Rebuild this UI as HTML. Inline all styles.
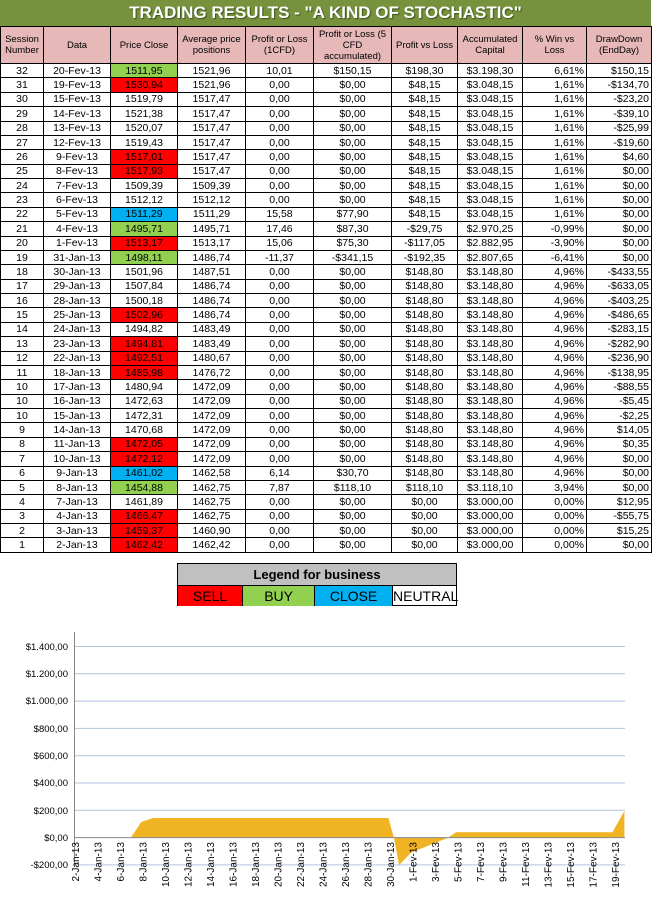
<!DOCTYPE html>
<html><head><meta charset="utf-8"><style>
body{margin:0;background:#fff;width:668px;height:922px;overflow:hidden;font-family:"Liberation Sans",Arial,sans-serif;position:relative}
.title{position:absolute;left:0;top:0;width:651px;height:26px;background:#76923c;color:#fff;font-weight:bold;font-size:17px;text-align:center;line-height:26px;text-shadow:1px 1px 1px #3d4f1c}
table{position:absolute;left:0;top:26px;width:651px;border-collapse:collapse;table-layout:fixed;font-size:10.5px;color:#000}
td{border:1px solid #000;padding:0 2px;height:14.38px;line-height:12px;text-align:center;white-space:nowrap;overflow:hidden;box-sizing:border-box}
tr.h td{background:#e6b8b7;height:37px;font-size:9.5px;line-height:11px;white-space:normal;padding:0 1px}
td.r{text-align:right}
.R{background:#ff0000}.G{background:#92d050}.B{background:#00b0f0}
.leg{position:absolute;left:177px;top:563px;width:280px;height:43px;border:1px solid #000;box-sizing:border-box;font-family:"Liberation Sans Narrow","Liberation Sans",sans-serif}
.leg .hd{height:21px;background:#c0c0c0;border-bottom:1px solid #000;text-align:center;font-weight:bold;font-size:13px;line-height:21px}
.leg .row{display:flex;height:20px;font-size:14px;line-height:21px}
.leg .row div{text-align:center;border-right:1px solid #000}
</style></head><body>
<div class="title">TRADING RESULTS - "A KIND OF STOCHASTIC"</div>
<table>
<colgroup><col style="width:43px"><col style="width:67px"><col style="width:67px"><col style="width:68px"><col style="width:68px"><col style="width:78px"><col style="width:66px"><col style="width:65px"><col style="width:64px"><col style="width:65px"></colgroup>
<tr class="h"><td>Session Number</td><td>Data</td><td>Price Close</td><td>Average price positions</td><td>Profit or Loss (1CFD)</td><td>Profit or Loss (5 CFD accumulated)</td><td>Profit vs Loss</td><td>Accumulated Capital</td><td>% Win vs Loss</td><td>DrawDown (EndDay)</td></tr>
<tr><td>32</td><td>20-Fev-13</td><td class="G">1511,95</td><td>1521,96</td><td>10,01</td><td>$150,15</td><td>$198,30</td><td>$3.198,30</td><td class="r">6,61%</td><td class="r">$150,15</td></tr>
<tr><td>31</td><td>19-Fev-13</td><td class="R">1530,94</td><td>1521,96</td><td>0,00</td><td>$0,00</td><td>$48,15</td><td>$3.048,15</td><td class="r">1,61%</td><td class="r">-$134,70</td></tr>
<tr><td>30</td><td>15-Fev-13</td><td>1519,79</td><td>1517,47</td><td>0,00</td><td>$0,00</td><td>$48,15</td><td>$3.048,15</td><td class="r">1,61%</td><td class="r">-$23,20</td></tr>
<tr><td>29</td><td>14-Fev-13</td><td>1521,38</td><td>1517,47</td><td>0,00</td><td>$0,00</td><td>$48,15</td><td>$3.048,15</td><td class="r">1,61%</td><td class="r">-$39,10</td></tr>
<tr><td>28</td><td>13-Fev-13</td><td>1520,07</td><td>1517,47</td><td>0,00</td><td>$0,00</td><td>$48,15</td><td>$3.048,15</td><td class="r">1,61%</td><td class="r">-$25,99</td></tr>
<tr><td>27</td><td>12-Fev-13</td><td>1519,43</td><td>1517,47</td><td>0,00</td><td>$0,00</td><td>$48,15</td><td>$3.048,15</td><td class="r">1,61%</td><td class="r">-$19,60</td></tr>
<tr><td>26</td><td>9-Fev-13</td><td class="R">1517,01</td><td>1517,47</td><td>0,00</td><td>$0,00</td><td>$48,15</td><td>$3.048,15</td><td class="r">1,61%</td><td class="r">$4,60</td></tr>
<tr><td>25</td><td>8-Fev-13</td><td class="R">1517,93</td><td>1517,47</td><td>0,00</td><td>$0,00</td><td>$48,15</td><td>$3.048,15</td><td class="r">1,61%</td><td class="r">$0,00</td></tr>
<tr><td>24</td><td>7-Fev-13</td><td>1509,39</td><td>1509,39</td><td>0,00</td><td>$0,00</td><td>$48,15</td><td>$3.048,15</td><td class="r">1,61%</td><td class="r">$0,00</td></tr>
<tr><td>23</td><td>6-Fev-13</td><td>1512,12</td><td>1512,12</td><td>0,00</td><td>$0,00</td><td>$48,15</td><td>$3.048,15</td><td class="r">1,61%</td><td class="r">$0,00</td></tr>
<tr><td>22</td><td>5-Fev-13</td><td class="B">1511,29</td><td>1511,29</td><td>15,58</td><td>$77,90</td><td>$48,15</td><td>$3.048,15</td><td class="r">1,61%</td><td class="r">$0,00</td></tr>
<tr><td>21</td><td>4-Fev-13</td><td class="G">1495,71</td><td>1495,71</td><td>17,46</td><td>$87,30</td><td>-$29,75</td><td>$2.970,25</td><td class="r">-0,99%</td><td class="r">$0,00</td></tr>
<tr><td>20</td><td>1-Fev-13</td><td class="R">1513,17</td><td>1513,17</td><td>15,06</td><td>$75,30</td><td>-$117,05</td><td>$2.882,95</td><td class="r">-3,90%</td><td class="r">$0,00</td></tr>
<tr><td>19</td><td>31-Jan-13</td><td class="G">1498,11</td><td>1486,74</td><td>-11,37</td><td>-$341,15</td><td>-$192,35</td><td>$2.807,65</td><td class="r">-6,41%</td><td class="r">$0,00</td></tr>
<tr><td>18</td><td>30-Jan-13</td><td>1501,96</td><td>1487,51</td><td>0,00</td><td>$0,00</td><td>$148,80</td><td>$3.148,80</td><td class="r">4,96%</td><td class="r">-$433,55</td></tr>
<tr><td>17</td><td>29-Jan-13</td><td>1507,84</td><td>1486,74</td><td>0,00</td><td>$0,00</td><td>$148,80</td><td>$3.148,80</td><td class="r">4,96%</td><td class="r">-$633,05</td></tr>
<tr><td>16</td><td>28-Jan-13</td><td>1500,18</td><td>1486,74</td><td>0,00</td><td>$0,00</td><td>$148,80</td><td>$3.148,80</td><td class="r">4,96%</td><td class="r">-$403,25</td></tr>
<tr><td>15</td><td>25-Jan-13</td><td class="R">1502,96</td><td>1486,74</td><td>0,00</td><td>$0,00</td><td>$148,80</td><td>$3.148,80</td><td class="r">4,96%</td><td class="r">-$486,65</td></tr>
<tr><td>14</td><td>24-Jan-13</td><td>1494,82</td><td>1483,49</td><td>0,00</td><td>$0,00</td><td>$148,80</td><td>$3.148,80</td><td class="r">4,96%</td><td class="r">-$283,15</td></tr>
<tr><td>13</td><td>23-Jan-13</td><td class="R">1494,81</td><td>1483,49</td><td>0,00</td><td>$0,00</td><td>$148,80</td><td>$3.148,80</td><td class="r">4,96%</td><td class="r">-$282,90</td></tr>
<tr><td>12</td><td>22-Jan-13</td><td class="R">1492,51</td><td>1480,67</td><td>0,00</td><td>$0,00</td><td>$148,80</td><td>$3.148,80</td><td class="r">4,96%</td><td class="r">-$236,90</td></tr>
<tr><td>11</td><td>18-Jan-13</td><td class="R">1485,98</td><td>1476,72</td><td>0,00</td><td>$0,00</td><td>$148,80</td><td>$3.148,80</td><td class="r">4,96%</td><td class="r">-$138,95</td></tr>
<tr><td>10</td><td>17-Jan-13</td><td>1480,94</td><td>1472,09</td><td>0,00</td><td>$0,00</td><td>$148,80</td><td>$3.148,80</td><td class="r">4,96%</td><td class="r">-$88,55</td></tr>
<tr><td>10</td><td>16-Jan-13</td><td>1472,63</td><td>1472,09</td><td>0,00</td><td>$0,00</td><td>$148,80</td><td>$3.148,80</td><td class="r">4,96%</td><td class="r">-$5,45</td></tr>
<tr><td>10</td><td>15-Jan-13</td><td>1472,31</td><td>1472,09</td><td>0,00</td><td>$0,00</td><td>$148,80</td><td>$3.148,80</td><td class="r">4,96%</td><td class="r">-$2,25</td></tr>
<tr><td>9</td><td>14-Jan-13</td><td>1470,68</td><td>1472,09</td><td>0,00</td><td>$0,00</td><td>$148,80</td><td>$3.148,80</td><td class="r">4,96%</td><td class="r">$14,05</td></tr>
<tr><td>8</td><td>11-Jan-13</td><td class="R">1472,05</td><td>1472,09</td><td>0,00</td><td>$0,00</td><td>$148,80</td><td>$3.148,80</td><td class="r">4,96%</td><td class="r">$0,35</td></tr>
<tr><td>7</td><td>10-Jan-13</td><td class="R">1472,12</td><td>1472,09</td><td>0,00</td><td>$0,00</td><td>$148,80</td><td>$3.148,80</td><td class="r">4,96%</td><td class="r">$0,00</td></tr>
<tr><td>6</td><td>9-Jan-13</td><td class="B">1461,02</td><td>1462,58</td><td>6,14</td><td>$30,70</td><td>$148,80</td><td>$3.148,80</td><td class="r">4,96%</td><td class="r">$0,00</td></tr>
<tr><td>5</td><td>8-Jan-13</td><td class="G">1454,88</td><td>1462,75</td><td>7,87</td><td>$118,10</td><td>$118,10</td><td>$3.118,10</td><td class="r">3,94%</td><td class="r">$0,00</td></tr>
<tr><td>4</td><td>7-Jan-13</td><td>1461,89</td><td>1462,75</td><td>0,00</td><td>$0,00</td><td>$0,00</td><td>$3.000,00</td><td class="r">0,00%</td><td class="r">$12,95</td></tr>
<tr><td>3</td><td>4-Jan-13</td><td class="R">1466,47</td><td>1462,75</td><td>0,00</td><td>$0,00</td><td>$0,00</td><td>$3.000,00</td><td class="r">0,00%</td><td class="r">-$55,75</td></tr>
<tr><td>2</td><td>3-Jan-13</td><td class="R">1459,37</td><td>1460,90</td><td>0,00</td><td>$0,00</td><td>$0,00</td><td>$3.000,00</td><td class="r">0,00%</td><td class="r">$15,25</td></tr>
<tr><td>1</td><td>2-Jan-13</td><td class="R">1462,42</td><td>1462,42</td><td>0,00</td><td>$0,00</td><td>$0,00</td><td>$3.000,00</td><td class="r">0,00%</td><td class="r">$0,00</td></tr>
</table>
<div class="leg"><div class="hd">Legend for business</div>
<div class="row"><div class="R" style="width:65px">SELL</div><div class="G" style="width:72px">BUY</div><div class="B" style="width:78px">CLOSE</div><div style="width:63px;border:none">NEUTRAL</div></div></div>
<svg style="position:absolute;left:0;top:0" width="668" height="922" font-family="Liberation Sans, sans-serif" font-size="9.5">
<g stroke="#b4c3e0" stroke-width="1">
<line x1="74" x2="625" y1="646.5" y2="646.5"/><line x1="74" x2="625" y1="673.8" y2="673.8"/><line x1="74" x2="625" y1="701.1" y2="701.1"/><line x1="74" x2="625" y1="728.4" y2="728.4"/><line x1="74" x2="625" y1="755.7" y2="755.7"/><line x1="74" x2="625" y1="783" y2="783"/><line x1="74" x2="625" y1="810.3" y2="810.3"/><line x1="74" x2="625" y1="864.9" y2="864.9"/>
</g>
<polygon fill="#f0b323" points="130.6,838 141.3,822 152.9,818 388.4,818 394,838 399.1,865 411,852.7 434.7,843 447.5,838 456,832.3 612.4,832.3 624.4,811 624.4,838"/>
<line x1="74.5" x2="74.5" y1="632" y2="866" stroke="#888"/>
<line x1="74" x2="625" y1="837.6" y2="837.6" stroke="#888"/>
<g text-anchor="end" fill="#000">
<text x="68" y="650">$1.400,00</text><text x="68" y="677">$1.200,00</text><text x="68" y="704">$1.000,00</text><text x="68" y="732">$800,00</text><text x="68" y="759">$600,00</text><text x="68" y="786">$400,00</text><text x="68" y="814">$200,00</text><text x="68" y="841">$0,00</text><text x="68" y="868">-$200,00</text>
</g>
<g text-anchor="end" fill="#000" font-size="10">
<text transform="translate(79,842) rotate(-90)">2-Jan-13</text>
<text transform="translate(101.5,842) rotate(-90)">4-Jan-13</text>
<text transform="translate(124,842) rotate(-90)">6-Jan-13</text>
<text transform="translate(146.5,842) rotate(-90)">8-Jan-13</text>
<text transform="translate(169,842) rotate(-90)">10-Jan-13</text>
<text transform="translate(191.5,842) rotate(-90)">12-Jan-13</text>
<text transform="translate(214,842) rotate(-90)">14-Jan-13</text>
<text transform="translate(236.5,842) rotate(-90)">16-Jan-13</text>
<text transform="translate(259,842) rotate(-90)">18-Jan-13</text>
<text transform="translate(281.5,842) rotate(-90)">20-Jan-13</text>
<text transform="translate(304,842) rotate(-90)">22-Jan-13</text>
<text transform="translate(326.5,842) rotate(-90)">24-Jan-13</text>
<text transform="translate(349,842) rotate(-90)">26-Jan-13</text>
<text transform="translate(371.5,842) rotate(-90)">28-Jan-13</text>
<text transform="translate(394,842) rotate(-90)">30-Jan-13</text>
<text transform="translate(416.5,842) rotate(-90)">1-Fev-13</text>
<text transform="translate(439,842) rotate(-90)">3-Fev-13</text>
<text transform="translate(461.5,842) rotate(-90)">5-Fev-13</text>
<text transform="translate(484,842) rotate(-90)">7-Fev-13</text>
<text transform="translate(506.5,842) rotate(-90)">9-Fev-13</text>
<text transform="translate(529,842) rotate(-90)">11-Fev-13</text>
<text transform="translate(551.5,842) rotate(-90)">13-Fev-13</text>
<text transform="translate(574,842) rotate(-90)">15-Fev-13</text>
<text transform="translate(596.5,842) rotate(-90)">17-Fev-13</text>
<text transform="translate(619,842) rotate(-90)">19-Fev-13</text>
</g>
</svg>
</body></html>
